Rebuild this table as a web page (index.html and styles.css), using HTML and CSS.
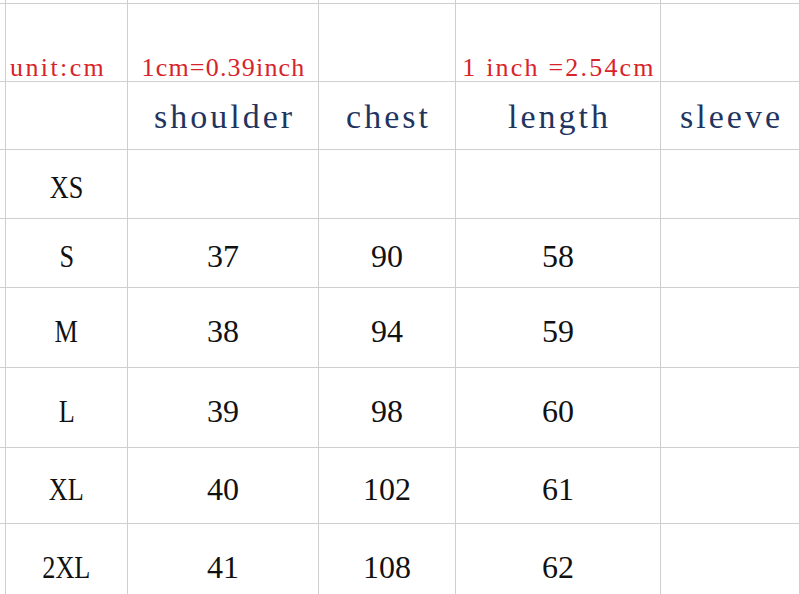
FILE: index.html
```html
<!DOCTYPE html>
<html>
<head>
<meta charset="utf-8">
<link rel="stylesheet" href="styles.css">
</head>
<body>
<div class="sheet">
  <div class="cell"></div><div class="cell"></div><div class="cell"></div><div class="cell"></div><div class="cell"></div><div class="cell"></div><div class="cell"></div>

  <div class="cell"></div>
  <div class="cell note note-unit">unit:cm</div>
  <div class="cell note note-cm">1cm=0.39inch</div>
  <div class="cell"></div>
  <div class="cell note note-inch">1 inch =2.54cm</div>
  <div class="cell"></div>
  <div class="cell"></div>

  <div class="cell"></div>
  <div class="cell"></div>
  <div class="cell head">shoulder</div>
  <div class="cell head">chest</div>
  <div class="cell head">length</div>
  <div class="cell head">sleeve</div>
  <div class="cell"></div>

  <div class="cell"></div>
  <div class="cell size"><span class="narrow">XS</span></div>
  <div class="cell num"></div>
  <div class="cell num"></div>
  <div class="cell num"></div>
  <div class="cell num"></div>
  <div class="cell"></div>

  <div class="cell"></div>
  <div class="cell size"><span class="narrow">S</span></div>
  <div class="cell num">37</div>
  <div class="cell num">90</div>
  <div class="cell num">58</div>
  <div class="cell num"></div>
  <div class="cell"></div>

  <div class="cell"></div>
  <div class="cell size"><span class="narrow">M</span></div>
  <div class="cell num">38</div>
  <div class="cell num">94</div>
  <div class="cell num">59</div>
  <div class="cell num"></div>
  <div class="cell"></div>

  <div class="cell"></div>
  <div class="cell size"><span class="narrow">L</span></div>
  <div class="cell num">39</div>
  <div class="cell num">98</div>
  <div class="cell num">60</div>
  <div class="cell num"></div>
  <div class="cell"></div>

  <div class="cell"></div>
  <div class="cell size"><span class="narrow">XL</span></div>
  <div class="cell num">40</div>
  <div class="cell num">102</div>
  <div class="cell num">61</div>
  <div class="cell num"></div>
  <div class="cell"></div>

  <div class="cell"></div>
  <div class="cell size"><span class="narrow">2XL</span></div>
  <div class="cell num">41</div>
  <div class="cell num">108</div>
  <div class="cell num">62</div>
  <div class="cell num"></div>
  <div class="cell"></div>
</div>
</body>
</html>
```

FILE: styles.css
```css
html, body {
  margin: 0;
  padding: 0;
  background: #ffffff;
  overflow: hidden;
}

.sheet {
  display: grid;
  grid-template-columns: 5px 121px 190px 136px 204px 138px 40px;
  grid-template-rows: 3px 77px 67px 68px 68px 79px 79px 75px 80px;
  gap: 1px;
  background: #cfcfcf;
  width: 840px;
}

.cell {
  background: #ffffff;
  display: flex;
  justify-content: center;
  align-items: center;
  white-space: nowrap;
  overflow: visible;
}

.note {
  align-items: flex-end;
  font-family: "Liberation Serif", serif;
  font-size: 26px;
  line-height: 24px;
  padding-bottom: 1px;
  color: #d8232a;
}

.note-unit {
  justify-content: flex-start;
  padding-left: 4px;
  letter-spacing: 2.4px;
}

.note-cm {
  letter-spacing: 1.2px;
  padding-left: 1px;
}

.note-inch {
  letter-spacing: 2.2px;
  padding-left: 2px;
}

.head {
  align-items: flex-end;
  font-family: "Liberation Serif", serif;
  font-size: 34px;
  letter-spacing: 3px;
  line-height: 34px;
  padding-bottom: 15px;
  padding-left: 3px;
  color: #1f3560;
}

.num, .size {
  font-family: "Liberation Serif", serif;
  font-size: 32px;
  line-height: 32px;
  padding-top: 6px;
  color: #111111;
}

.narrow {
  display: inline-block;
  transform: scaleX(0.82);
}
```
